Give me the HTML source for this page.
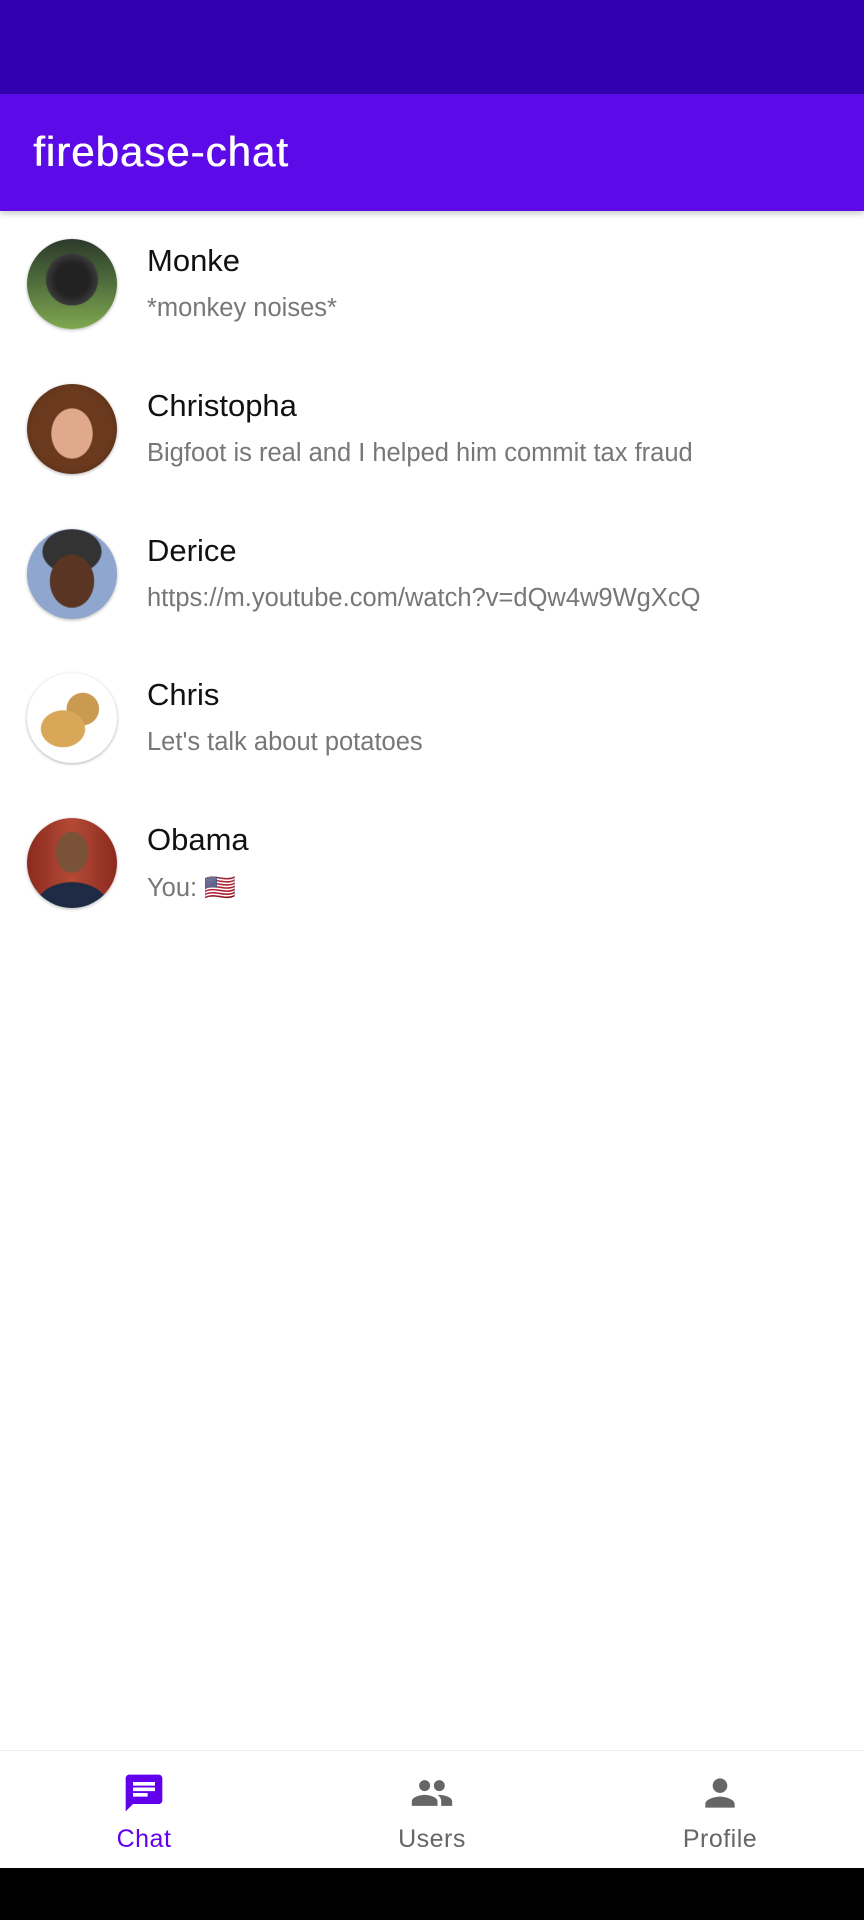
<!DOCTYPE html>
<html><head><meta charset="utf-8"><style>
*{margin:0;padding:0;box-sizing:border-box}
body{width:864px;height:1920px;position:relative;background:#fff;font-family:"Liberation Sans",sans-serif;overflow:hidden}
.status{position:absolute;top:0;left:0;width:864px;height:94px;background:#3200b0}
.bar{position:absolute;top:94px;left:0;width:864px;height:117px;background:#5c0be8;box-shadow:0 3px 6px rgba(0,0,0,.2)}
.bar span{position:absolute;left:33px;top:34px;color:#fff;font-size:42px;font-weight:normal;letter-spacing:1px;text-shadow:0.6px 0 0 #fff}
.item{position:absolute;left:0;width:864px;height:144px}
.av{position:absolute;left:27px;top:0;width:90px;height:90px;border-radius:50%;box-shadow:0 1px 3px rgba(0,0,0,.3)}
.name{position:absolute;left:147px;top:4px;font-size:31px;color:#111}
.msg{position:absolute;left:147px;top:55px;font-size:25.5px;color:#777}
.nav{position:absolute;top:1750px;left:0;width:864px;height:118px;background:#fff;border-top:1px solid #eee}
.tab{position:absolute;top:0;width:288px;height:118px;text-align:center}
.tab svg{position:absolute;top:20px;left:122px}
.tab div{position:absolute;top:74px;width:100%;font-size:25px;color:#666;letter-spacing:0.5px}
.black{position:absolute;top:1868px;left:0;width:864px;height:52px;background:#000}
</style></head><body>
<div class="status"></div>
<div class="bar"><span>firebase-chat</span></div>

<div class="item" style="top:239px"><div class="av" style="background:radial-gradient(circle at 50% 45%,#222 25%,#3a3a3a 38%,transparent 40%),linear-gradient(#2c3a2a 0%,#4d6a3b 45%,#7fa84f 100%)"></div><div class="name">Monke</div><div class="msg">*monkey noises*</div></div>
<div class="item" style="top:384px"><div class="av" style="background:radial-gradient(ellipse 28% 34% at 50% 55%,#e0a98c 80%,transparent 84%),radial-gradient(circle,#6b3a1e 60%,#4a2712 100%)"></div><div class="name">Christopha</div><div class="msg">Bigfoot is real and I helped him commit tax fraud</div></div>
<div class="item" style="top:529px"><div class="av" style="background:radial-gradient(ellipse 30% 36% at 50% 58%,#5a3524 80%,transparent 84%),radial-gradient(ellipse 40% 30% at 50% 25%,#333 80%,transparent 84%),#8fa7cf"></div><div class="name">Derice</div><div class="msg">https://m.youtube.com/watch?v=dQw4w9WgXcQ</div></div>
<div class="item" style="top:673px"><div class="av" style="background:radial-gradient(ellipse 30% 25% at 40% 62%,#d8a858 80%,transparent 84%),radial-gradient(ellipse 22% 22% at 62% 40%,#c99a50 80%,transparent 84%),#fff"></div><div class="name">Chris</div><div class="msg">Let's talk about potatoes</div></div>
<div class="item" style="top:818px"><div class="av" style="background:radial-gradient(ellipse 22% 28% at 50% 38%,#7a5238 80%,transparent 84%),radial-gradient(ellipse 50% 35% at 50% 100%,#1f2a44 80%,transparent 84%),linear-gradient(90deg,#8b2a1e,#b44a36 50%,#8b2a1e)"></div><div class="name">Obama</div><div class="msg">You: 🇺🇸</div></div>

<div class="nav">
<div class="tab" style="left:0"><svg width="44" height="44" viewBox="0 0 24 24"><path fill="#6200ee" d="M20 2H4c-1.1 0-2 .9-2 2v18l4-4h14c1.1 0 2-.9 2-2V4c0-1.1-.9-2-2-2zM6 9h12v2H6V9zm8 5H6v-2h8v2zm4-6H6V6h12v2z"/></svg><div style="color:#6200ee">Chat</div></div>
<div class="tab" style="left:288px"><svg width="44" height="44" viewBox="0 0 24 24"><path fill="#666" d="M16 11c1.66 0 2.99-1.34 2.99-3S17.66 5 16 5c-1.66 0-3 1.34-3 3s1.34 3 3 3zm-8 0c1.66 0 2.99-1.34 2.99-3S9.66 5 8 5C6.34 5 5 6.34 5 8s1.34 3 3 3zm0 2c-2.33 0-7 1.17-7 3.5V19h14v-2.5c0-2.33-4.67-3.5-7-3.5zm8 0c-.29 0-.62.02-.97.05 1.16.84 1.97 1.97 1.97 3.45V19h6v-2.5c0-2.33-4.67-3.5-7-3.5z"/></svg><div>Users</div></div>
<div class="tab" style="left:576px"><svg width="44" height="44" viewBox="0 0 24 24"><path fill="#666" d="M12 12c2.21 0 4-1.79 4-4s-1.79-4-4-4-4 1.79-4 4 1.79 4 4 4zm0 2c-2.67 0-8 1.34-8 4v2h16v-2c0-2.66-5.33-4-8-4z"/></svg><div>Profile</div></div>
</div>
<div class="black"></div>
</body></html>
